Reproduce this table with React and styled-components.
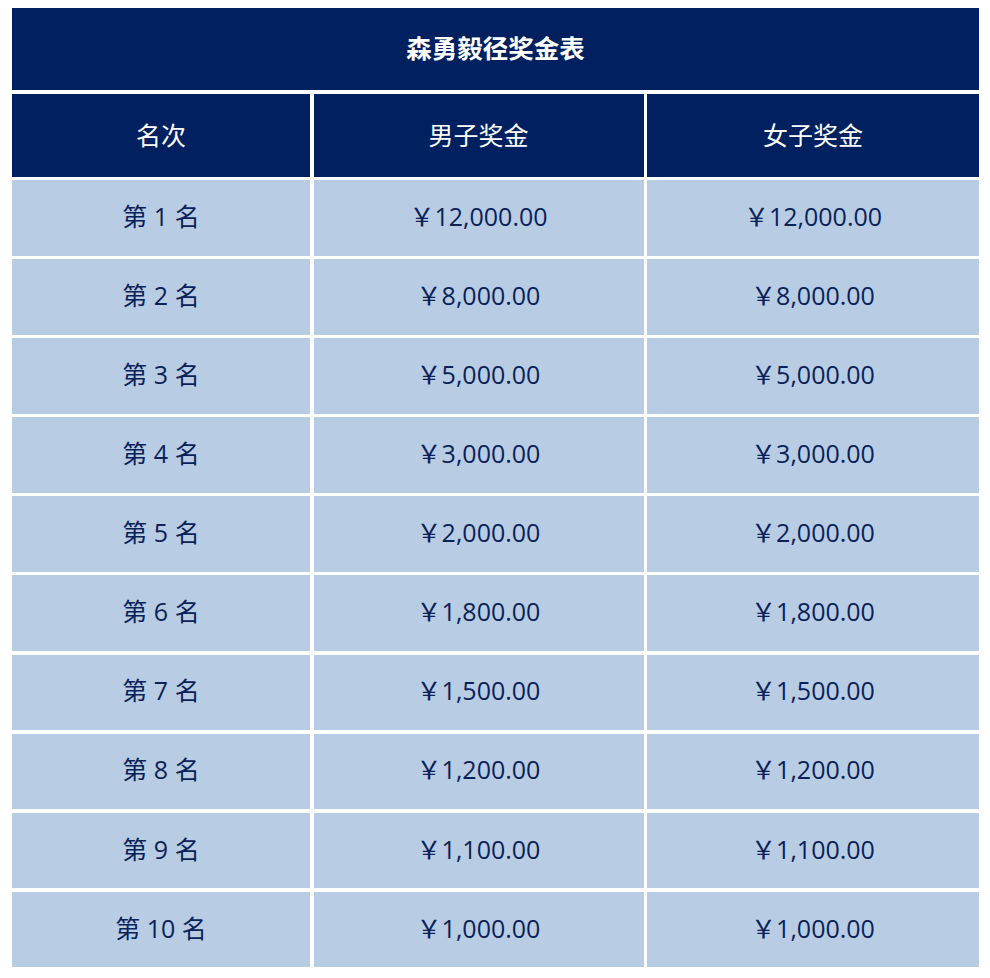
import React from "react";
import styled, { createGlobalStyle } from "styled-components";

const Global = createGlobalStyle`
  html, body { margin: 0; padding: 0; background: #ffffff; }
  body { font-family: "Open Sans", "Noto Sans CJK SC", sans-serif; }
`;

const Page = styled.div`
  padding: 8px 0 0 12px;
`;

const Table = styled.div`
  width: 967px;
  display: grid;
  grid-template-columns: 298px 330px 332px;
  grid-template-rows: 82px 83px;
  grid-auto-rows: 75.6px;
  column-gap: 3.5px;
  row-gap: 3.5px;
`;

const Cell = styled.div`
  display: flex;
  align-items: center;
  justify-content: center;
  font-size: 25px;
  line-height: 1;
  white-space: pre;
  padding-bottom: ${(p) => (p.$head ? "0" : "3px")};
  background: ${(p) => (p.$head ? "#00205f" : "#b8cce4")};
  color: ${(p) => (p.$head ? "#ffffff" : "#0a2258")};
`;

const Title = styled(Cell)`
  grid-column: 1 / -1;
  font-weight: 700;
  font-size: 25.5px;
`;

const rows = [
  ["第 1 名", "￥12,000.00", "￥12,000.00"],
  ["第 2 名", "￥8,000.00", "￥8,000.00"],
  ["第 3 名", "￥5,000.00", "￥5,000.00"],
  ["第 4 名", "￥3,000.00", "￥3,000.00"],
  ["第 5 名", "￥2,000.00", "￥2,000.00"],
  ["第 6 名", "￥1,800.00", "￥1,800.00"],
  ["第 7 名", "￥1,500.00", "￥1,500.00"],
  ["第 8 名", "￥1,200.00", "￥1,200.00"],
  ["第 9 名", "￥1,100.00", "￥1,100.00"],
  ["第 10 名", "￥1,000.00", "￥1,000.00"],
];

export default function App() {
  return (
    <>
      <Global />
      <Page>
        <Table>
          <Title $head>森勇毅径奖金表</Title>
          <Cell $head>名次</Cell>
          <Cell $head>男子奖金</Cell>
          <Cell $head>女子奖金</Cell>
          {rows.map((r, i) =>
            r.map((c, j) => <Cell key={i + "-" + j}>{c}</Cell>)
          )}
        </Table>
      </Page>
    </>
  );
}
